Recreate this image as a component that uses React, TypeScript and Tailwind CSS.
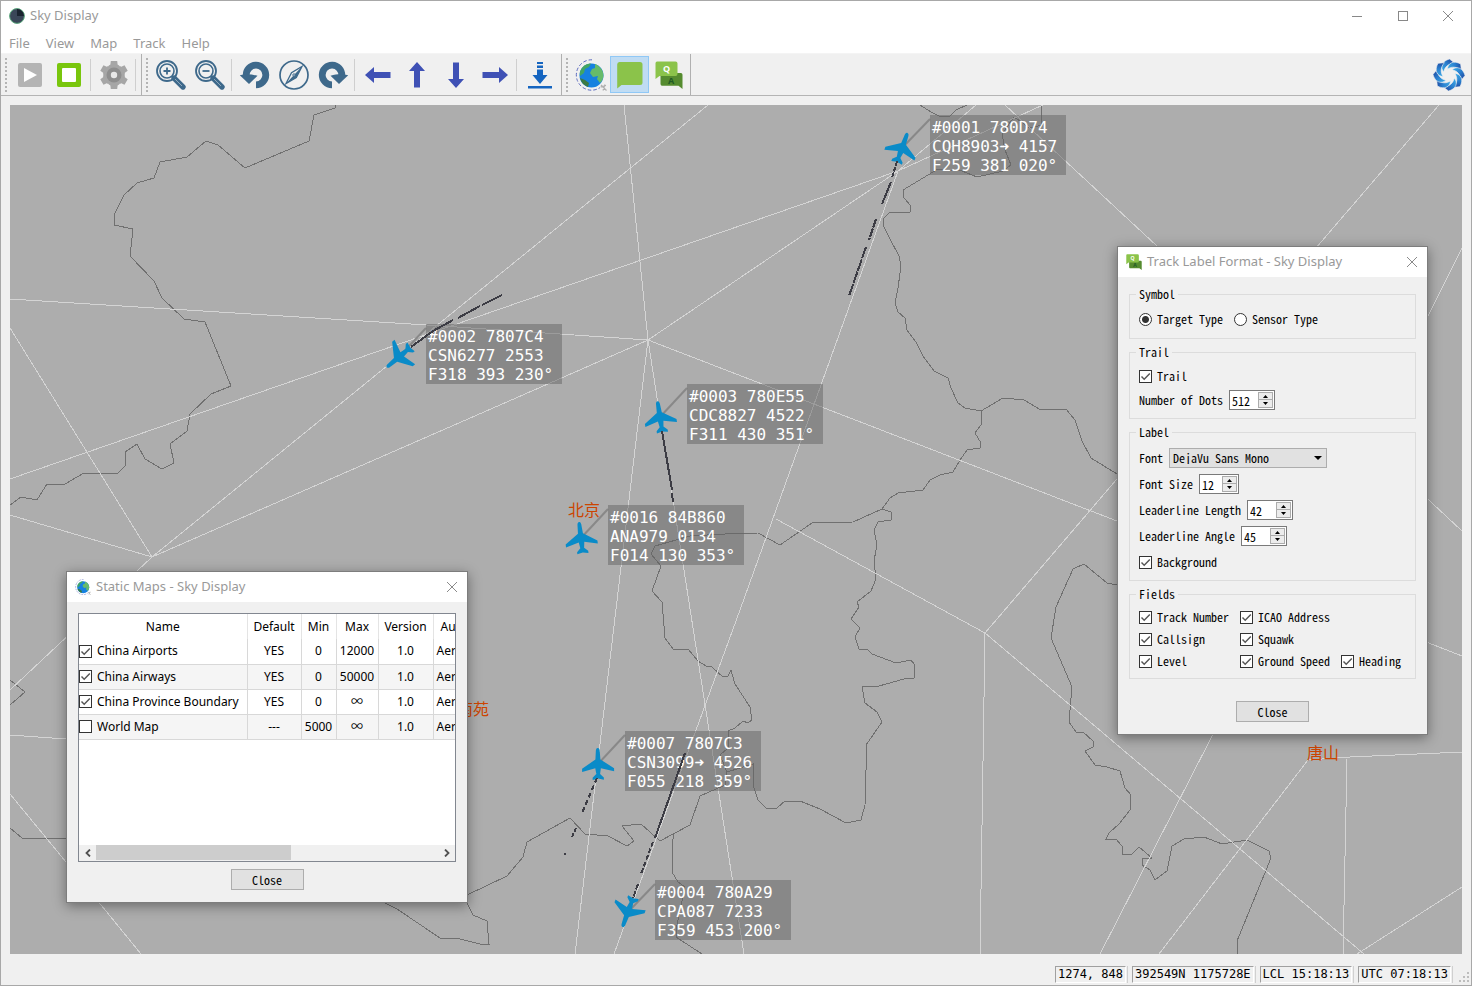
import { type ReactNode } from "react";

const UI = "font-['Noto_Sans','Noto_Sans_CJK_SC',sans-serif]";
const FORM = "font-['Noto_Sans_Mono_CJK_SC','Liberation_Mono',monospace]";
const MONO = "font-['DejaVu_Sans_Mono',monospace]";

/* ---------- map data, in window pixels ---------- */

const AIRWAYS = [
  "10,299 427,325 648,340",
  "10,328 152,557",
  "10,515 152,557 10,690",
  "152,557 708,105",
  "152,557 500,405 648,340",
  "10,479 500,309 898,171 1043,105",
  "648,340 898,171 976,105",
  "648,340 624,105",
  "648,340 575,954",
  "648,340 744,954",
  "648,340 1117,521 1462,656",
  "898,171 740,610 614,954",
  "1005,105 1157,246 1462,531",
  "1439,105 1117,479 985,633",
  "776,519 985,633 980,954",
  "985,633 1364,954",
  "1462,248 1427,318 1100,954",
  "1159,954 1308,760 1350,757 1462,752",
  "1347,759 1343,954",
  "1357,954 1462,887",
  "10,735 66,739",
  "10,794 66,862 141,954",
];

const BORDERS = [
  "335,105 335,108 314,115 309,141 245,168 218,145 206,141 187,157 160,162 154,178 137,183 124,195 114,215 114,225 133,229 130,256 154,281 162,298 184,319 205,322 231,386 211,394 190,414 187,431 170,444 174,463 162,469 145,459 137,444 125,452 126,465 118,473 84,473 65,484 47,484 37,500 21,497 10,505",
  "920,105 931,112 939,116 950,116 956,110 967,105",
  "1041,105 1042,125 1030,128 1014,117 1002,134 1005,150 1011,165 1003,171 977,177 962,171 938,169 903,190 904,198 911,206 910,212 899,212 890,212 884,218 883,225 890,239 899,256 901,266 898,288 895,303 898,312 905,318 907,330 916,342 923,356 934,371 948,378 951,388 958,403 965,408 981,411 1003,398 1024,400 1041,410 1066,409 1075,420 1082,441 1091,458 1117,474",
  "981,411 981,425 975,433 981,443 980,448 967,450 960,460 953,472 940,475 930,480 923,490 898,493 890,498 882,509 853,522 812,523 780,545 758,533 725,534 690,536 655,546 651,554 661,566 652,591 662,602 665,638 673,649 688,649 698,661 706,666 712,667 723,677 728,676 731,670 735,684 750,707 752,720 748,723 743,721 735,728 728,731 728,748 720,755 727,772 725,785 700,796 690,825 660,841 641,824 622,826 634,841 627,846 608,836 585,834 570,818 527,842 523,857 507,876 467,895",
  "379,900 397,909 440,938 460,939 480,944 489,944 487,921 473,915 467,903",
  "674,833 672,845 672,872 678,882 685,887 677,925 676,937 702,954",
  "727,772 753,764 753,785 758,800 767,809 777,808 785,801 800,801 820,809 846,823 861,820 865,805 866,770 866,745 882,722 877,712 865,703 862,687 879,686 904,679 914,678 914,664 911,660 896,663 872,654 867,649 859,649 855,637 860,628 851,619 859,607 857,602 871,591 876,579 874,561 877,545 874,530 878,522 891,520 891,512 882,509",
  "1117,585 1107,583 1084,564 1073,569 1056,607 1051,638 1072,687 1069,722 1076,732 1083,732 1093,741 1093,747 1085,751 1095,765 1107,767 1120,771 1125,788 1131,795 1130,810 1119,824 1109,833 1106,839 1116,839 1122,846 1122,855 1132,854 1139,847 1152,858 1142,859 1142,865 1150,870 1155,880 1167,871 1172,846 1184,839 1204,837 1222,844 1247,840 1269,851 1271,858 1237,941 1237,954",
  "10,680 25,692 10,705",
  "10,828 22,838 66,838",
];

const TRAILS: { d: string; dash?: string }[] = [
  { d: "M897,161 L892,178", dash: "5 1" },
  { d: "M891,182 L882,204" },
  { d: "M876,219 L869,240", dash: "9 1" },
  { d: "M866,247 L849,296", dash: "12 1" },
  { d: "M502,295 L482,305 M480,306 L458,318" },
  { d: "M453,320 L433,331 L411,347" },
  { d: "M662,431 L672,490 M672,493 L673,502" },
  { d: "M597,778 L582,813", dash: "5 3" },
  { d: "M576,828 L572,837", dash: "4 2" },
  { d: "M564,854 L566,854" },
  { d: "M685,753 L655,838" },
  { d: "M653,842 L641,874", dash: "5 2" },
  { d: "M638,884 L633,898", dash: "6 1" },
];

interface Track {
  x: number;
  y: number;
  labelX: number;
  labelY: number;
  heading: number;
  lines: [string, string, string];
}

const TRACKS: Track[] = [
  { x: 902, y: 148, labelX: 930, labelY: 115, heading: 20, lines: ["#0001 780D74", "CQH8903➜ 4157", "F259 381 020°"] },
  { x: 399, y: 357, labelX: 426, labelY: 324, heading: 230, lines: ["#0002 7807C4", "CSN6277 2553", "F318 393 230°"] },
  { x: 660, y: 417, labelX: 687, labelY: 384, heading: 351, lines: ["#0003 780E55", "CDC8827 4522", "F311 430 351°"] },
  { x: 581, y: 538, labelX: 608, labelY: 505, heading: 353, lines: ["#0016 84B860", "ANA979 0134", "F014 130 353°"] },
  { x: 598, y: 764, labelX: 625, labelY: 731, heading: 359, lines: ["#0007 7807C3", "CSN3099➜ 4526", "F055 218 359°"] },
  { x: 628, y: 912, labelX: 655, labelY: 880, heading: 200, lines: ["#0004 780A29", "CPA087 7233", "F359 453 200°"] },
];

const PLANE =
  "M0,-16C1.6,-16 2,-14 2,-12L2.5,-4.5L16,4.5V7.6L2.8,4.2L1.9,10L5.6,13.6V15.8L0,14.6L-5.6,15.8V13.6L-1.9,10L-2.8,4.2L-16,7.6V4.5L-2.5,-4.5L-2,-12C-2,-14 -1.6,-16 0,-16Z";

const CITIES = [
  { name: "北京", x: 568, y: 500 },
  { name: "南苑", x: 457, y: 699 },
  { name: "唐山", x: 1307, y: 743 },
];

function RadarMap() {
  return (
    <>
      <svg className="absolute inset-0 h-full w-full" aria-hidden="true">
        <g transform="translate(-10,-105)" fill="none" shapeRendering="crispEdges">
          {BORDERS.map((p) => (
            <polyline key={p} points={p} stroke="#707070" />
          ))}
          {AIRWAYS.map((p) => (
            <polyline key={p} points={p} stroke="#d4d4d4" />
          ))}
        </g>
        <g transform="translate(-10,-105)">
          {TRACKS.map((t) => (
            <g key={t.lines[0]}>
              <line x1={t.x} y1={t.y} x2={t.labelX} y2={t.labelY + 4} stroke="#888888" strokeWidth="2" />
              <path d={PLANE} fill="#0a8bc8" transform={`translate(${t.x},${t.y}) rotate(${t.heading})`} />
            </g>
          ))}
        </g>
      </svg>
      {CITIES.map((c) => (
        <span
          key={c.name}
          className="absolute font-['Noto_Sans_CJK_SC',sans-serif] text-[16px] leading-[18px] whitespace-nowrap text-[#cc4400]"
          style={{ left: c.x - 10, top: c.y - 105 }}
        >
          {c.name}
        </span>
      ))}
      {TRACKS.map((t) => (
        <div
          key={t.lines[0]}
          className={`absolute ${MONO} w-[136px] bg-[#646464]/50 px-[2px] pt-[3px] text-[16px] leading-[19px] whitespace-pre text-white`}
          style={{ left: t.labelX - 10, top: t.labelY - 105 }}
        >
          {t.lines.map((l) => (
            <div key={l} className="h-[19px]">
              {l}
            </div>
          ))}
        </div>
      ))}
      <svg className="pointer-events-none absolute inset-0 h-full w-full" aria-hidden="true">
        <g transform="translate(-10,-105)" fill="none" stroke="#3c3c44" strokeWidth="2" shapeRendering="crispEdges">
          {TRAILS.map((t) => (
            <path key={t.d} d={t.d} strokeDasharray={t.dash} />
          ))}
        </g>
      </svg>
    </>
  );
}

/* ---------- icons ---------- */

function PlayIcon() {
  return (
    <svg width="24" height="24" viewBox="0 0 24 24">
      <rect width="24" height="24" rx="2" fill="#b4b4b4" />
      <path d="M6,5L19,12L6,19Z" fill="#fff" />
    </svg>
  );
}

function StopIcon() {
  return (
    <svg width="24" height="24" viewBox="0 0 24 24">
      <rect width="24" height="24" rx="2" fill="#79c60d" />
      <rect x="5" y="5" width="14" height="14" rx="1" fill="#fff" />
    </svg>
  );
}

function GearIcon() {
  return (
    <svg width="30" height="30" viewBox="-15 -15 30 30">
      <circle r="10.5" fill="#a6a6a6" />
      {[0, 60, 120, 180, 240, 300].map((a) => (
        <path key={a} d="M-5.5,-9L-3.6,-10.5L-3.2,-14H3.2L3.6,-10.5L5.5,-9Z" fill="#a6a6a6" transform={`rotate(${a})`} />
      ))}
      <circle r="7.5" fill="#8e8e8e" />
      <circle r="3.2" fill="#e8e8e8" />
    </svg>
  );
}

function ZoomIcon({ plus }: { plus: boolean }) {
  return (
    <svg width="32" height="32" viewBox="0 0 32 32" fill="none" stroke="#3e698b">
      <circle cx="12" cy="12" r="10" strokeWidth="1.8" />
      <circle cx="12" cy="12" r="7" strokeWidth="1.6" />
      <path d={plus ? "M12,8.5V15.5M8.5,12H15.5" : "M8.5,12H15.5"} strokeWidth="1.8" />
      <path d="M19,19L28,28" strokeWidth="5.4" strokeLinecap="round" />
      <path d="M20,20L27,27" stroke="#8fa9bd" strokeWidth="1" />
    </svg>
  );
}

function TurnIcon({ flip = false }: { flip?: boolean }) {
  return (
    <svg width="32" height="32" viewBox="0 0 32 32" className={flip ? "-scale-x-100" : ""}>
      <path d="M7.2,16.5A9.8,9.8 0 1 1 17,25.8" fill="none" stroke="#3e698b" strokeWidth="6.8" />
      <path d="M0.8,16.2C6,15 12,15 18.5,16.8L10,25Z" fill="#3e698b" />
    </svg>
  );
}

function CompassIcon() {
  return (
    <svg width="32" height="32" viewBox="0 0 32 32" fill="none" stroke="#3e698b">
      <circle cx="16" cy="16" r="14" strokeWidth="1.7" />
      <path d="M24,7.5L18.3,18.5L8,24.5L13.5,13.8Z" strokeWidth="1.3" />
      <path d="M24,7.5L18.3,18.5L8,24.5L15.5,16.5Z" fill="#3e698b" stroke="none" />
      <circle cx="16" cy="16" r="1.2" fill="#f0f0f0" strokeWidth="1" />
    </svg>
  );
}

function ArrowIcon({ rotate }: { rotate: string }) {
  return (
    <svg width="26" height="26" viewBox="-13 -13 26 26" className={rotate}>
      <path d="M-13,0L-4,-8V-3H12.5V3H-4V8Z" fill="#3f51b5" />
    </svg>
  );
}

function DownloadIcon() {
  return (
    <svg width="26" height="28" viewBox="0 0 26 28" fill="#1565c0">
      <path d="M10,1H16V3H10ZM10,4.5H16V7H10ZM10,8.5H16V14H20.5L13,23L5.5,14H10Z" />
      <path d="M1,25H25V27.5H1Z" />
    </svg>
  );
}

function GlobeIcon({ className = "h-8 w-8" }: { className?: string }) {
  return (
    <svg viewBox="0 0 32 32" className={className}>
      <path d="M17,0.8A15.2,15.2 0 1 0 25,28.6" fill="none" stroke="#5c6bc0" strokeWidth="1" strokeDasharray="3.5 2" />
      <circle cx="16.5" cy="16.5" r="12" fill="#1681e0" />
      <path d="M6,10.5C8,6.5 12,4.5 16,4.5L14,8L10,10L9,14L5,17C4.5,14 5,12 6,10.5Z" fill="#43a563" />
      <path d="M20,5C25,7 28.5,11.5 28.5,17C28,20 27,22 25,24L22,20L23,17L18,18L15,14L17,10L20,9Z" fill="#66bb6a" />
      <path d="M5,19L10,21L14,24L13,28C9,26.5 6,23.5 5,19Z" fill="#3c7a45" />
      <path d="M26,26L31.5,31.5M31,26.5L25.5,28M28,31.5L30,25.5" stroke="#b0b0b0" strokeWidth="1.2" />
    </svg>
  );
}

function BubbleIcon() {
  return (
    <svg width="28" height="28" viewBox="0 0 28 28">
      <path d="M4,1H24A2.5,2.5 0 0 1 26.5,3.5V21.5A2.5,2.5 0 0 1 24,24H5.5L1.2,27.5V3.5A2.5,2.5 0 0 1 4,1Z" fill="#8bc34a" />
    </svg>
  );
}

function QaIcon({ className = "h-7 w-7" }: { className?: string }) {
  return (
    <svg viewBox="0 0 28 28" className={className} fontFamily="Open Sans, sans-serif" fontWeight="bold" textAnchor="middle">
      <path d="M7,12H25A2,2 0 0 1 27.5,14V28L23.5,24.8H7A2,2 0 0 1 5.5,23V14Z" fill="#558b2f" />
      <path d="M3,0.5H20.5A2,2 0 0 1 22.5,2.5V13A2,2 0 0 1 20.5,15H4.5L0.5,18V2.5A2,2 0 0 1 3,0.5Z" fill="#8bc34a" />
      <text x="11.5" y="11" fontSize="9" fill="#fff">
        Q
      </text>
      <text x="16" y="22.5" fontSize="9" fill="#1f5a25">
        A
      </text>
    </svg>
  );
}

function AppIcon() {
  return (
    <svg width="16" height="16" viewBox="0 0 16 16">
      <circle cx="8" cy="8" r="7.4" fill="#3a4658" stroke="#5aa77c" />
      <path d="M8,8V1A7,7 0 0 1 15,8Z" fill="#1b2430" />
    </svg>
  );
}

function SwirlLogo() {
  return (
    <svg width="32" height="32" viewBox="-16 -16 32 32" className="mr-[6px]">
      <defs>
        <linearGradient id="blade" x1="0" y1="1" x2="1" y2="0">
          <stop offset="0" stopColor="#3fb0ea" />
          <stop offset="0.5" stopColor="#2a7fce" />
          <stop offset="1" stopColor="#1b3a93" />
        </linearGradient>
      </defs>
      {[0, 45, 90, 135, 180, 225, 270, 315].map((a) => (
        <path
          key={a}
          d="M0.5,-16L5.5,-12C-0.5,-11.5 -4.5,-8 -5.2,-3C-9.5,-8 -7,-14 0.5,-16Z"
          fill="url(#blade)"
          stroke="#f0f0f0"
          strokeWidth="0.6"
          transform={`rotate(${a})`}
        />
      ))}
    </svg>
  );
}

function CloseGlyph() {
  return (
    <svg width="12" height="12" viewBox="0 0 12 12" stroke="#8a8a8a" fill="none">
      <path d="M1,1L11,11M11,1L1,11" />
    </svg>
  );
}

/* ---------- toolbar ---------- */

function ToolGroup({ children }: { children: ReactNode }) {
  return (
    <div className="flex items-center border-r border-[#b0b0b0] pr-[2px]">
      <span className="mr-[3px] ml-[4px] h-[34px] w-[2px] bg-[repeating-linear-gradient(to_bottom,#b4b4b4_0_2px,transparent_2px_4px)]" />
      {children}
    </div>
  );
}

function ToolButton({ label, active = false, children }: { label: string; active?: boolean; children: ReactNode }) {
  return (
    <button
      type="button"
      aria-label={label}
      aria-pressed={active}
      className={`flex h-[37px] w-[39px] items-center justify-center ${active ? "border border-[#90c8f6] bg-[#c0dcf3]" : ""}`}
    >
      {children}
    </button>
  );
}

function Divider() {
  return <span className="mx-[2px] h-[32px] w-[2px] border-l border-[#cfcfcf]" />;
}

function Toolbar() {
  return (
    <div className="flex h-[43px] shrink-0 items-stretch border-t border-b border-t-[#f4f4f4] border-b-[#b4b4b4]">
      <ToolGroup>
        <ToolButton label="Start"><PlayIcon /></ToolButton>
        <ToolButton label="Stop"><StopIcon /></ToolButton>
        <Divider />
        <ToolButton label="Settings"><GearIcon /></ToolButton>
        <Divider />
      </ToolGroup>
      <ToolGroup>
        <ToolButton label="Zoom in"><ZoomIcon plus /></ToolButton>
        <ToolButton label="Zoom out"><ZoomIcon plus={false} /></ToolButton>
        <Divider />
        <ToolButton label="Rotate left"><TurnIcon /></ToolButton>
        <ToolButton label="North up"><CompassIcon /></ToolButton>
        <ToolButton label="Rotate right"><TurnIcon flip /></ToolButton>
        <Divider />
        <ToolButton label="Move left"><ArrowIcon rotate="rotate-0" /></ToolButton>
        <ToolButton label="Move up"><ArrowIcon rotate="rotate-90" /></ToolButton>
        <ToolButton label="Move down"><ArrowIcon rotate="-rotate-90" /></ToolButton>
        <ToolButton label="Move right"><ArrowIcon rotate="rotate-180" /></ToolButton>
        <Divider />
        <ToolButton label="Reset view"><DownloadIcon /></ToolButton>
      </ToolGroup>
      <ToolGroup>
        <ToolButton label="Static maps"><GlobeIcon /></ToolButton>
        <ToolButton label="Track labels" active><BubbleIcon /></ToolButton>
        <ToolButton label="Track label format"><QaIcon /></ToolButton>
      </ToolGroup>
      <div className="flex flex-1 items-center justify-end">
        <SwirlLogo />
      </div>
    </div>
  );
}

/* ---------- form parts ---------- */

function Tick({ id, checked = true }: { id: string; checked?: boolean }) {
  return (
    <span className="relative inline-flex h-[13px] w-[13px] shrink-0">
      <input id={id} type="checkbox" defaultChecked={checked} className="peer h-[13px] w-[13px] appearance-none border border-[#333] bg-white" />
      <svg viewBox="0 0 13 13" className="pointer-events-none absolute inset-0 hidden peer-checked:block" fill="none" stroke="#555" strokeWidth="1.4">
        <path d="M2.5,6.5L5.2,9.3L10.8,3.5" />
      </svg>
    </span>
  );
}

function CheckField({ id, label }: { id: string; label: string }) {
  return (
    <div className="flex items-center gap-[5px]">
      <Tick id={id} />
      <label htmlFor={id}>{label}</label>
    </div>
  );
}

function RadioField({ id, label, checked = false }: { id: string; label: string; checked?: boolean }) {
  return (
    <div className="flex items-center gap-[5px]">
      <input
        id={id}
        name="symbol"
        type="radio"
        defaultChecked={checked}
        className="h-[13px] w-[13px] appearance-none rounded-full border border-[#333] bg-white checked:bg-[radial-gradient(circle,#333_0_3px,white_4px)]"
      />
      <label htmlFor={id}>{label}</label>
    </div>
  );
}

function SpinField({ id, label, value, wide = true }: { id: string; label: string; value: string; wide?: boolean }) {
  return (
    <div className="flex items-center gap-[6px]">
      <label htmlFor={id}>{label}</label>
      <div className={`flex h-[20px] items-center border border-[#7a7a7a] bg-white px-px pl-[2px] ${wide ? "w-[46px]" : "w-[40px]"}`}>
        <input id={id} type="text" inputMode="numeric" defaultValue={value} className="h-[16px] min-w-0 flex-1 bg-white leading-[14px]" />
        <div className="flex w-[15px] shrink-0 flex-col">
          <button type="button" aria-label={`Increase ${label}`} className="flex h-2 items-center justify-center border border-[#acacac] bg-[#ececec]">
            <svg width="5" height="3" viewBox="0 0 5 3"><path d="M2.5,0L5,3H0Z" /></svg>
          </button>
          <button type="button" aria-label={`Decrease ${label}`} className="flex h-2 items-center justify-center border border-t-0 border-[#acacac] bg-[#ececec]">
            <svg width="5" height="3" viewBox="0 0 5 3"><path d="M0,0H5L2.5,3Z" /></svg>
          </button>
        </div>
      </div>
    </div>
  );
}

function Group({ title, children }: { title: string; children: ReactNode }) {
  return (
    <fieldset className="border border-[#dcdcdc] px-[6px]">
      <legend className="h-[12px] px-[3px]">{title}</legend>
      <div className="px-[3px]">{children}</div>
    </fieldset>
  );
}

function PushButton({ children }: { children: ReactNode }) {
  return (
    <button type="button" className={`${FORM} h-[21px] w-[73px] border border-[#adadad] bg-[#e1e1e1] text-[12px] leading-[12px]`}>
      {children}
    </button>
  );
}

function Dialog({ title, icon, className, children }: { title: string; icon: ReactNode; className: string; children: ReactNode }) {
  return (
    <section aria-label={title} className={`absolute flex flex-col border border-[#7d7d7d] bg-[#f0f0f0] shadow-[0_3px_12px_rgba(0,0,0,0.4)] ${className}`}>
      <header className={`${UI} flex h-[30px] shrink-0 items-center bg-white pr-[9px] pl-2 text-[13px] text-[#999]`}>
        {icon}
        <h2 className="ml-[5px] flex-1">{title}</h2>
        <button type="button" aria-label={`Close ${title}`}>
          <CloseGlyph />
        </button>
      </header>
      {children}
    </section>
  );
}

const MAPS = [
  { name: "China Airports", on: true, def: "YES", min: "0", max: "12000" },
  { name: "China Airways", on: true, def: "YES", min: "0", max: "50000" },
  { name: "China Province Boundary", on: true, def: "YES", min: "0", max: "∞" },
  { name: "World Map", on: false, def: "---", min: "5000", max: "∞" },
];

function StaticMapsDialog() {
  return (
    <Dialog title="Static Maps - Sky Display" icon={<GlobeIcon className="h-4 w-4" />} className="top-[466px] left-[56px] w-[402px]">
      <div className="flex flex-col items-center px-[11px] pt-[11px] pb-[12px]">
        <div className="flex h-[249px] w-full flex-col border border-[#828790] bg-white">
          <div className="flex-1 overflow-hidden">
            <table className={`${UI} w-[419px] table-fixed border-collapse text-[12px] leading-[16px] whitespace-nowrap`}>
              <colgroup>
                <col className="w-[168px]" />
                <col className="w-[54px]" />
                <col className="w-[35px]" />
                <col className="w-[42px]" />
                <col className="w-[55px]" />
                <col className="w-[65px]" />
              </colgroup>
              <thead>
                <tr className="h-[25px] *:border-r *:border-[#e4e4e4] *:p-0 *:font-normal">
                  <th>Name</th>
                  <th>Default</th>
                  <th>Min</th>
                  <th>Max</th>
                  <th>Version</th>
                  <th className="pl-[7px]! text-left">Author</th>
                </tr>
              </thead>
              <tbody>
                {MAPS.map((m, i) => (
                  <tr key={m.name} className="h-[25px] text-center *:border-r *:border-b *:border-[#d8d8d8] *:p-0 even:bg-[#f5f5f5]">
                    <td>
                      <div className="flex items-center gap-[5px]">
                        <Tick id={`map-${i}`} checked={m.on} />
                        <label htmlFor={`map-${i}`}>{m.name}</label>
                      </div>
                    </td>
                    <td>{m.def}</td>
                    <td>{m.min}</td>
                    <td>{m.max}</td>
                    <td>1.0</td>
                    <td className="pl-[3px]! text-left">Aero</td>
                  </tr>
                ))}
              </tbody>
            </table>
          </div>
          <div className="flex h-[16px] shrink-0 items-center bg-[#f0f0f0]">
            <button type="button" aria-label="Scroll left" className="flex h-full w-[17px] items-center justify-center">
              <svg width="6" height="8" viewBox="0 0 6 8" fill="none" stroke="#505050" strokeWidth="1.8"><path d="M5,0.5L1.5,4L5,7.5" /></svg>
            </button>
            <div className="h-[15px] flex-1 self-start">
              <div className="h-full w-[57%] bg-[#cdcdcd]" />
            </div>
            <button type="button" aria-label="Scroll right" className="flex h-full w-[17px] items-center justify-center">
              <svg width="6" height="8" viewBox="0 0 6 8" fill="none" stroke="#505050" strokeWidth="1.8"><path d="M1,0.5L4.5,4L1,7.5" /></svg>
            </button>
          </div>
        </div>
        <div className="mt-[7px] flex">
          <PushButton>Close</PushButton>
        </div>
      </div>
    </Dialog>
  );
}

function LabelFormatDialog() {
  return (
    <Dialog title="Track Label Format - Sky Display" icon={<QaIcon className="h-4 w-4" />} className="top-[141px] left-[1107px] w-[311px]">
      <div className={`${FORM} flex flex-col gap-[7px] px-[11px] pt-[11px] pb-[12px] text-[12px] leading-[12px]`}>
        <Group title="Symbol">
          <div className="flex h-[38px] items-center gap-[11px]">
            <RadioField id="target" label="Target Type" checked />
            <RadioField id="sensor" label="Sensor Type" />
          </div>
        </Group>
        <Group title="Trail">
          <div className="grid auto-rows-[24px] items-center py-[6px]">
            <CheckField id="trail" label="Trail" />
            <SpinField id="dots" label="Number of Dots" value="512" />
          </div>
        </Group>
        <Group title="Label">
          <div className="grid auto-rows-[26px] items-center pt-[7px] pb-[5px]">
            <div className="flex items-center gap-[6px]">
              <label htmlFor="font">Font</label>
              <div className="relative">
                <select id="font" className="h-[20px] w-[158px] appearance-none border border-[#adadad] bg-[#e1e1e1] pl-[3px]">
                  <option>DejaVu Sans Mono</option>
                </select>
                <svg width="8" height="4" viewBox="0 0 8 4" className="pointer-events-none absolute top-2 right-[5px]"><path d="M0,0H8L4,4Z" /></svg>
              </div>
            </div>
            <SpinField id="size" label="Font Size" value="12" wide={false} />
            <SpinField id="length" label="Leaderline Length" value="42" />
            <SpinField id="angle" label="Leaderline Angle" value="45" />
            <CheckField id="background" label="Background" />
          </div>
        </Group>
        <Group title="Fields">
          <div className="grid auto-rows-[22px] grid-cols-[101px_101px_1fr] items-center pt-[6px] pb-[6px]">
            <CheckField id="number" label="Track Number" />
            <CheckField id="icao" label="ICAO Address" />
            <span />
            <CheckField id="callsign" label="Callsign" />
            <CheckField id="squawk" label="Squawk" />
            <span />
            <CheckField id="level" label="Level" />
            <CheckField id="speed" label="Ground Speed" />
            <CheckField id="heading" label="Heading" />
          </div>
        </Group>
        <div className="mt-[15px] flex justify-center">
          <PushButton>Close</PushButton>
        </div>
      </div>
    </Dialog>
  );
}

/* ---------- window ---------- */

const STATUS = ["1274, 848", "392549N 1175728E", "LCL 15:18:13", "UTC 07:18:13"];

export default function App() {
  return (
    <div className="flex h-screen flex-col border border-[#a8a8a8] bg-[#f0f0f0] text-black">
      <header className={`${UI} flex h-[30px] shrink-0 items-center bg-white pl-2 text-[13px] text-[#999]`}>
        <AppIcon />
        <h1 className="ml-[5px] flex-1">Sky Display</h1>
        <button type="button" aria-label="Minimize" className="flex w-[46px] justify-center">
          <svg width="10" height="10" viewBox="0 0 10 10"><path d="M0,5.5H10" stroke="#888" /></svg>
        </button>
        <button type="button" aria-label="Maximize" className="flex w-[45px] justify-center">
          <svg width="10" height="10" viewBox="0 0 10 10"><rect x="0.5" y="0.5" width="9" height="9" fill="none" stroke="#888" /></svg>
        </button>
        <button type="button" aria-label="Close window" className="flex w-[46px] justify-center">
          <CloseGlyph />
        </button>
      </header>
      <nav className={`${UI} flex h-[22px] shrink-0 items-end bg-white text-[13px] leading-[20px] text-[#999]`}>
        {["File", "View", "Map", "Track", "Help"].map((m) => (
          <button key={m} type="button" className="px-2">
            {m}
          </button>
        ))}
      </nav>
      <Toolbar />
      <main className="relative mx-[9px] mt-[9px] min-h-0 flex-1 overflow-hidden bg-[#adadad]">
        <RadarMap />
        <StaticMapsDialog />
        <LabelFormatDialog />
      </main>
      <footer className={`${MONO} flex h-[31px] shrink-0 items-end justify-end gap-1 pb-[2px] text-[12px] leading-[15px]`}>
        {STATUS.map((s) => (
          <div key={s} className="border-r border-[#d0d0d0] pr-px">
            <div className="border border-t-[#a0a0a0] border-r-white border-b-white border-l-[#a0a0a0] px-[2px]">{s}</div>
          </div>
        ))}
        <svg width="12" height="12" viewBox="0 0 12 12" className="ml-[2px]" fill="#bdbdbd" aria-hidden="true">
          <path d="M8,1h2v2h-2zM4,5h2v2h-2zM8,5h2v2h-2zM0,9h2v2h-2zM4,9h2v2h-2zM8,9h2v2h-2z" />
        </svg>
      </footer>
    </div>
  );
}
